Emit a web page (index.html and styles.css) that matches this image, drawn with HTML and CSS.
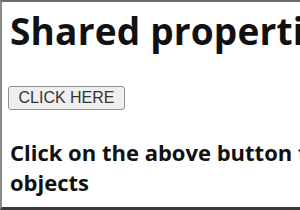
FILE: index.html
```html
<!DOCTYPE html>
<html lang="en">
<head>
  <meta charset="UTF-8" />
  <title>Shared properties</title>
  <link rel="stylesheet" href="styles.css">
</head>
<body>
  <div class="window">
    <h1>Shared properties of objects</h1>
    <button class="click-button">CLICK HERE</button>
    <p class="info">Click on the above button to check the shared properties of<br>objects</p>
  </div>
</body>
</html>
```

FILE: styles.css
```css
html, body {
  margin: 0;
  padding: 0;
  background: #fff;
}
.window {
  width: 300px;
  height: 210px;
  box-sizing: border-box;
  border-top: 2px solid #6e6e6e;
  border-left: 2px solid #8a8a8a;
  border-bottom: 3px solid #3a3a3a;
  padding: 0 0 0 6px;
  overflow: hidden;
  font-family: "Open Sans", sans-serif;
  color: #111;
}
h1 {
  margin: 7px 0 0 2px;
  font-size: 37px;
  line-height: 44px;
  font-weight: 700;
  white-space: nowrap;
  letter-spacing: 0.2px;
}
.click-button {
  display: block;
  margin-top: 33px;
  width: 117px;
  height: 24px;
  padding: 0;
  font-family: "Liberation Sans", Arial, sans-serif;
  font-size: 16px;
  color: #333;
  background: #efefef;
  border: 1px solid #8f8f8f;
  border-radius: 3px;
}
.info {
  margin: 27px 0 0 2px;
  font-size: 22px;
  line-height: 30px;
  font-weight: 700;
  white-space: nowrap;
}
```
